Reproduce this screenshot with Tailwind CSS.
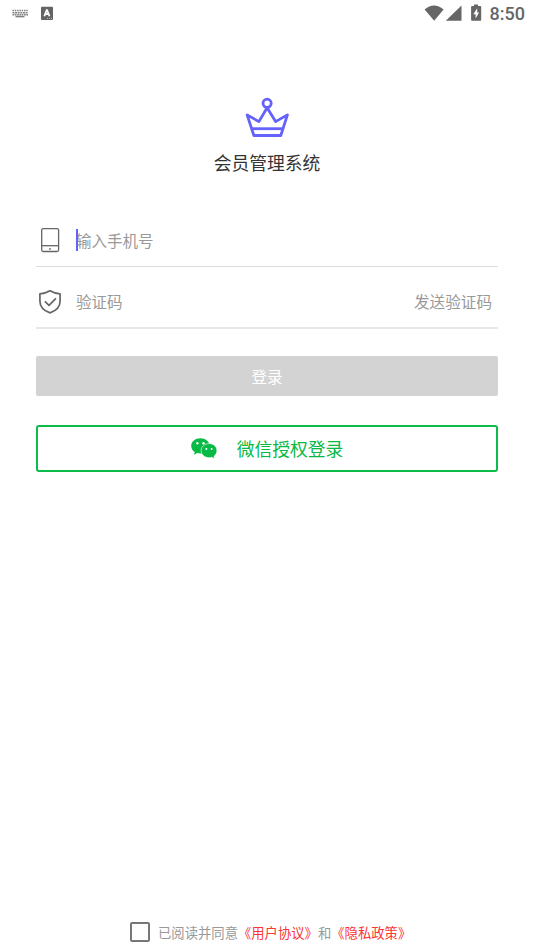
<!DOCTYPE html>
<html lang="zh-CN">
<head>
<meta charset="utf-8">
<title>会员管理系统</title>
<script src="https://cdn.jsdelivr.net/npm/@tailwindcss/browser@4"></script>
</head>
<body class="bg-white">
<div class="flex h-[950px] w-[534px] flex-col overflow-hidden bg-white font-['Noto_Sans_CJK_SC',sans-serif]">
  <header class="flex h-[28px] shrink-0 items-start justify-between text-[#666]">
    <div class="flex">
      <svg class="h-[28px] w-[60px]" viewBox="0 0 60 28">
        <g fill="none" stroke="#808080" stroke-width="1.5">
          <path d="M12.5 10.5H28" stroke-dasharray="1.5 .8"/>
          <path d="M12.5 12.7H28" stroke-dasharray="2 .6"/>
          <path d="M12.5 14.8H28" stroke-dasharray="1.7 .6"/>
          <path d="M15.5 16.6H24.5"/>
        </g>
        <rect x="41" y="6.7" width="12" height="13.2" rx="1" fill="#646464"/>
        <path d="M44.300 16.200L46.700 10H47.100L49.500 16.200M45.400 14.200H48.400" fill="none" stroke="#fff" stroke-width="1.800" stroke-linejoin="bevel"/>
        <path d="M47 18.4H52" stroke="#bbb" stroke-width="1" stroke-dasharray="1 1"/>
      </svg>
    </div>
    <div class="flex">
      <svg class="h-[28px] w-[64px]" viewBox="424 0 64 28" fill="#666">
        <path d="M424.6 9.4Q434 1.400 443.600 9.400L434.200 20.700Z"/>
        <path d="M461.500 5.400V20.700H445.800Z"/>
        <path d="M474 4.500H478V6H480.300Q481.200 6 481.200 7V19.800Q481.200 20.700 480.300 20.700H472Q471.100 20.700 471.100 19.800V7Q471.100 6 472 6H474Z"/>
        <path d="M477.200 8.300L473.300 14.300H475.600V18.500L479.100 12.400H477.200Z" fill="#fff"/>
      </svg>
      <span class="w-[46px] pl-[1.500px] pt-[4px] font-[Roboto,sans-serif] text-[18px] font-medium leading-[20px]">8:50</span>
    </div>
  </header>

  <main class="mx-[36px] flex flex-1 flex-col">
    <div class="flex flex-col items-center pt-[68px]">
      <svg class="h-[42px] w-[46px]" viewBox="244 96 46 42" fill="none" stroke="#6462fb" stroke-width="2.8" stroke-linejoin="round">
        <circle cx="267.100" cy="103.300" r="4.100"/>
        <path d="M267.100 107.800L258.900 121.600L247.100 114.900L253.900 135.500H280.800L287.400 114.900L275.600 121.600Z"/>
        <path d="M252 128.700H282.500"/>
      </svg>
      <h1 class="mt-[11px] text-[17.800px] leading-[26px] text-[#333]">会员管理系统</h1>
    </div>

    <form class="mt-[39px]">
      <label class="flex h-[53px] items-start border-b border-[#dcdcdc]">
        <svg class="h-[53px] w-[40px]" viewBox="36 214 40 53" fill="none" stroke="#666" stroke-width="1.300">
          <rect x="41.700" y="228.600" width="16.900" height="22.900" rx="1.500"/>
          <path d="M41.700 245.700H58.600"/><circle cx="50" cy="248.900" r=".9" fill="#666" stroke="none"/>
        </svg>
        <span class="relative pt-[13px] text-[15.500px] leading-[26px] text-[#999]">输入手机号<i class="absolute left-0 top-[15px] h-[22px] w-[2px] bg-[#6462fb]"></i></span>
      </label>
      <label class="flex h-[62px] items-start border-b-2 border-[#e8e8e8]">
        <svg class="h-[60px] w-[40px]" viewBox="36 267 40 60" fill="none" stroke="#666" stroke-width="1.700" stroke-linejoin="round">
          <path d="M50 290.800Q54.500 293.500 60.100 293.900V301C60.100 306.500 56.800 310.500 50 312.900C43.200 310.500 39.900 306.500 39.900 301V293.900Q45.500 293.500 50 290.800Z"/>
          <path d="M44.900 301.300L49 305.300L55.900 298.300"/>
        </svg>
        <span class="flex-1 pt-[21px] text-[15.500px] leading-[26px] text-[#999]">验证码</span>
        <span class="pr-[6px] pt-[21px] text-[15.600px] leading-[26px] text-[#999]">发送验证码</span>
      </label>
      <button type="button" class="mt-[27px] flex h-[40px] w-full items-center justify-center rounded-[2px] bg-[#d3d3d3] pt-[2px] text-[15.600px] text-white">登录</button>
      <button type="button" class="mt-[29px] flex h-[47px] w-full items-center justify-center rounded-[3px] border-2 border-[#0cbb4a] text-[17.800px] text-[#07b945]">
        <svg class="mr-[19px] h-[24px] w-[27px]" viewBox="191 437 27 24">
          <path fill="#07b945" d="M200.400 438.300C205.400 438.300 209.600 441.500 209.600 446C209.600 450.200 205.400 453.600 200.400 453.600C199.300 453.600 198.200 453.400 197.200 453.100L194 454.900L194.800 452.100C192.600 450.700 191.200 448.600 191.200 446C191.200 441.500 195.400 438.300 200.400 438.300Z"/>
          <path fill="#07b945" stroke="#fff" stroke-width=".6" d="M209 443.600C213.400 443.600 216.900 446.700 216.900 450.600C216.900 452.900 215.800 454.900 214 456.200L214.700 458.700L211.900 457.300C211 457.600 210 457.700 209 457.700C204.600 457.700 201.100 454.600 201.100 450.600C201.100 446.700 204.600 443.600 209 443.600Z"/>
          <g fill="#fff"><circle cx="197.400" cy="443.300" r="1.200"/><circle cx="203.500" cy="443.300" r="1.200"/><circle cx="206.400" cy="448.900" r="1"/><circle cx="211.600" cy="448.900" r="1"/></g>
        </svg>
        <span>微信授权登录</span>
      </button>
    </form>
  </main>

  <footer class="flex h-[36px] items-center pb-[1px] pl-[130px] text-[13.330px] leading-[20px] text-[#999]">
    <span class="mr-[8px] h-[20px] w-[20px] rounded-[2px] border-2 border-[#777]"></span>
    <span class="whitespace-nowrap pt-[2px]">已阅读并同意<a class="text-[#fa3534]">《用户协议》</a>和<a class="text-[#fa3534]">《隐私政策》</a></span>
  </footer>
</div>
</body>
</html>
